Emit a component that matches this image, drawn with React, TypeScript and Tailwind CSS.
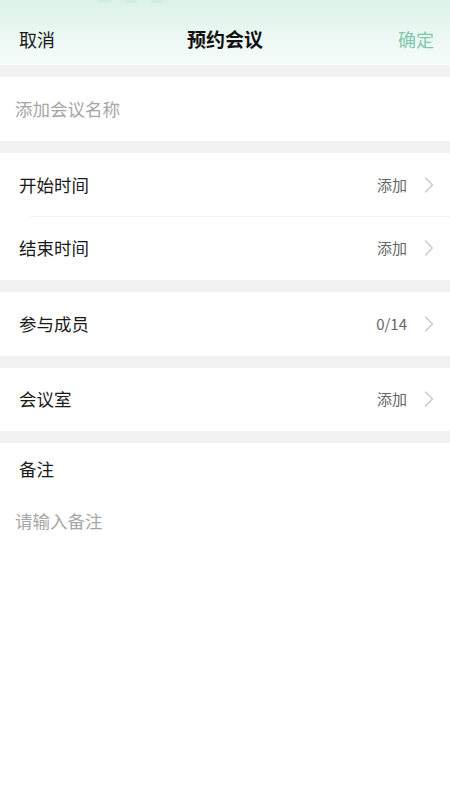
import React from "react";

const font = { fontFamily: '"Noto Sans CJK SC", "Noto Sans", sans-serif' };

function Chevron() {
  return (
    <svg width="10" height="16" viewBox="0 0 10 16" fill="none" className="ml-[17px] mr-[16px]">
      <path d="M1.5 1L8.5 8L1.5 15" stroke="#c6c8d2" strokeWidth="1.4" strokeLinecap="round" strokeLinejoin="round" />
    </svg>
  );
}

function Row({ label, value, divider }: { label: string; value: string; divider?: boolean }) {
  return (
    <div className="relative flex items-center h-[63.5px] bg-white">
      <span className="pl-[19px] text-[17.5px] text-[#1a1a1a] flex-1">{label}</span>
      <span className="text-[15px] text-[#666]">{value}</span>
      <Chevron />
      {divider && <div className="absolute bottom-0 left-[30px] right-0 h-px bg-[#f3f3f3]" />}
    </div>
  );
}

function Gap() {
  return <div className="h-[12px] bg-[#f2f2f2]" />;
}

export default function App() {
  return (
    <div className="w-[450px] h-[800px] bg-white overflow-hidden" style={font}>
      {/* Header */}
      <div className="relative h-[65px] bg-gradient-to-b from-[#dcf2e9] to-[#f7fcfa] flex items-end pb-[12px]">
        <div className="absolute top-[-6px] left-[98px] flex gap-[12px]">
          <div className="w-[14px] h-[9px] rounded-full bg-[#d2eee0]" />
          <div className="w-[14px] h-[9px] rounded-full bg-[#d2eee0]" />
          <div className="w-[14px] h-[9px] rounded-full bg-[#d2eee0]" />
        </div>
        <span className="pl-[19px] w-[120px] text-[18px] text-[#1a1a1a]">取消</span>
        <span className="flex-1 text-center text-[19px] font-bold text-[#111]">预约会议</span>
        <span className="w-[120px] pr-[16px] text-right text-[18px] text-[#7fc8ae]">确定</span>
      </div>

      <Gap />
      <div className="h-[64px] bg-white flex items-center pl-[15px]">
        <input
          placeholder="添加会议名称"
          className="w-full text-[17.5px] outline-none placeholder-[#a6a6a6] bg-transparent"
        />
      </div>

      <Gap />
      <Row label="开始时间" value="添加" divider />
      <Row label="结束时间" value="添加" />

      <Gap />
      <Row label="参与成员" value="0/14" />

      <Gap />
      <Row label="会议室" value="添加" />

      <Gap />
      <div className="bg-white">
        <div className="h-[52px] flex items-center pl-[19px] text-[17.5px] text-[#1a1a1a]">备注</div>
        <textarea
          placeholder="请输入备注"
          className="block w-full h-[200px] pl-[15px] pt-[13px] text-[17.5px] outline-none resize-none placeholder-[#a6a6a6]"
        />
      </div>
    </div>
  );
}
